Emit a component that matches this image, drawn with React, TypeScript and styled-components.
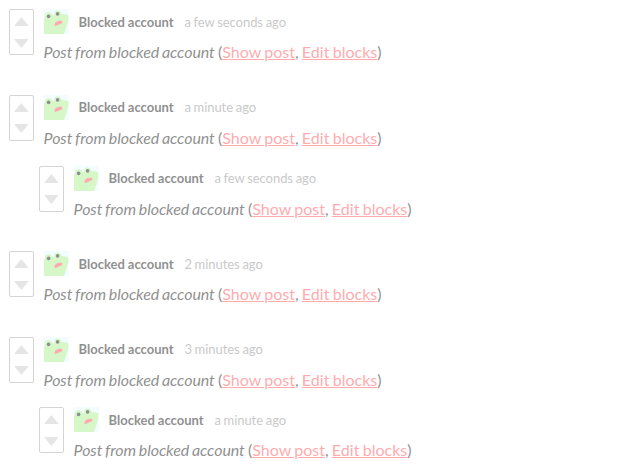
import React from "react";
import styled, { createGlobalStyle } from "styled-components";

const GlobalStyle = createGlobalStyle`
  body {
    margin: 0;
    background: #fff;
    color: #222;
    font-family: Lato, "Liberation Sans", sans-serif;
    font-size: 16px;
    overflow: hidden;
  }
`;

const Feed = styled.main`
  padding: 9.36px 9px 0;
`;

const Thread = styled.section`
  padding-bottom: 15px;
`;

const Replies = styled.div`
  padding-left: 30px;
`;

const Post = styled.article`
  display: flex;
  gap: 10px;
  height: 70.6px;
  opacity: 0.5;
`;

const VoteBox = styled.div`
  box-sizing: border-box;
  flex: none;
  display: flex;
  flex-direction: column;
  align-items: center;
  gap: 12.5px;
  width: 25px;
  height: 46px;
  padding-top: 7px;
  border: 1px solid #aaa;
  border-radius: 2px;
`;

const Arrow = styled.svg`
  flex: none;
  display: block;
  width: 16px;
  height: 9px;
  margin-left: -1px;
`;

const Content = styled.div`
  min-width: 0;
`;

const Header = styled.header`
  display: flex;
  align-items: center;
  height: 25px;
  font-size: 13px;
  line-height: 25px;
  white-space: nowrap;
`;

const Avatar = styled.svg`
  flex: none;
  display: block;
  width: 25px;
  height: 25px;
`;

const Author = styled.strong`
  padding-top: 0.76px;
  margin-left: 9.6px;
  font-weight: 700;
  word-spacing: -0.3px;
`;

const Time = styled.time`
  padding-top: 0.76px;
  margin-left: 10.8px;
  color: #949494;
  letter-spacing: -0.06px;
  word-spacing: -0.5px;
`;

const Body = styled.p`
  margin: 5px 0 0 -0.4px;
  line-height: 25.6px;
  word-spacing: -0.9px;
  white-space: nowrap;
`;

const Notice = styled.em`
  letter-spacing: -0.07px;
`;

const Action = styled.a`
  color: #ff5a5f;
  letter-spacing: 0.03px;
  text-decoration: underline;
  cursor: pointer;
`;

function Frog() {
  return (
    <Avatar viewBox="0 0 25 25" aria-hidden="true">
      <rect width="25" height="25" fill="#e8faff" />
      <path
        d="M0 10L1 6.5C1 2.5 7 1.8 8.3 6L10.5 6.5C9 1 15.5-.6 17.3 4.5C18 6 23.5 4.6 24.3 7Q24.8 10 23 16L20 25H0Z"
        fill="#aef091"
      />
      <circle cx="4.6" cy="7.4" r="1.8" fill="#222" />
      <circle cx="13.6" cy="4.9" r="1.8" fill="#222" />
      <path
        d="M10.5 16.5C10.5 12.8 13 11.8 17.5 11.8Q19 12.2 18 14.4Q16.5 14.4 14.5 15.8L11.5 17Z"
        fill="#ff5a5f"
      />
    </Avatar>
  );
}

function BlockedPost({ time }: { time: string }) {
  return (
    <Post>
      <VoteBox>
        <Arrow viewBox="0 0 16 9">
          <path d="M8.4 0L15.7 9H1.1Z" fill="#ccc" />
        </Arrow>
        <Arrow viewBox="0 0 16 9">
          <path d="M1.1 0H15.7L8.4 9Z" fill="#ccc" />
        </Arrow>
      </VoteBox>
      <Content>
        <Header>
          <Frog />
          <Author>Blocked account</Author>
          <Time>{time}</Time>
        </Header>
        <Body>
          <Notice>Post from blocked account</Notice> (<Action>Show post</Action>, <Action>Edit blocks</Action>)
        </Body>
      </Content>
    </Post>
  );
}

const threads: { time: string; replies: string[] }[] = [
  { time: "a few seconds ago", replies: [] },
  { time: "a minute ago", replies: ["a few seconds ago"] },
  { time: "2 minutes ago", replies: [] },
  { time: "3 minutes ago", replies: ["a minute ago"] },
];

export default function App() {
  return (
    <>
      <GlobalStyle />
      <Feed>
        {threads.map((thread) => (
          <Thread key={thread.time}>
            <BlockedPost time={thread.time} />
            <Replies>
              {thread.replies.map((time) => (
                <BlockedPost key={time} time={time} />
              ))}
            </Replies>
          </Thread>
        ))}
      </Feed>
    </>
  );
}
